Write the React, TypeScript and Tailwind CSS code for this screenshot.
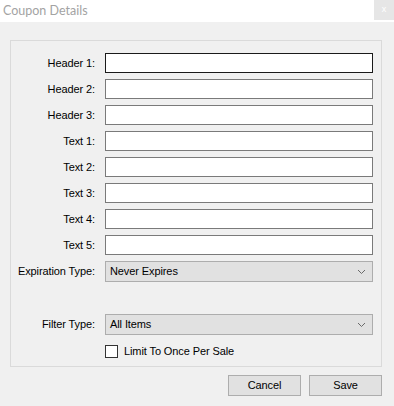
import React from 'react';

const textFields = ['Header 1:', 'Header 2:', 'Header 3:', 'Text 1:', 'Text 2:', 'Text 3:', 'Text 4:', 'Text 5:'];

function Chevron() {
  return (
    <svg width="9" height="6" viewBox="0 0 9 6" className="shrink-0">
      <path d="M1 1 L4.5 4.5 L8 1" fill="none" stroke="#6a6a6a" strokeWidth="1" />
    </svg>
  );
}

function Combo({ value, className }: { value: string; className: string }) {
  return (
    <div className={`flex h-[21px] w-[268px] items-center justify-between border border-[#adadad] bg-[#e1e1e1] pl-[4px] pr-[6px] text-[#000] ${className}`}>
      <span>{value}</span>
      <Chevron />
    </div>
  );
}

export default function App() {
  return (
    <div className="flex h-[406px] w-[394px] flex-col bg-[#f0f0f0] text-[11px] tracking-[-0.1px] font-['Liberation_Sans',Arial,sans-serif] text-black">
      {/* title bar */}
      <div className="flex h-[22px] items-start justify-between bg-white">
        <span className="pl-[3px] pt-[2px] text-[12.5px] tracking-normal font-['Lato',sans-serif] text-[#a3a3a3]">Coupon Details</span>
        <div className="flex h-[20px] w-[20px] items-center justify-center bg-[#e6e6e6] text-[9px] text-white">x</div>
      </div>

      <div className="px-[10px] pt-[18px]">
        <div className="flex h-[327px] w-[372px] flex-col border border-[#dadada] pt-[12px]">
          <div className="flex flex-col gap-[6px]">
            {textFields.map((label, i) => (
              <div key={label} className="flex items-center">
                <span className="w-[84px] text-right">{label}</span>
                <div className={`ml-[10px] h-[20px] w-[268px] bg-white border ${i === 0 ? 'border-[#1a1a1a]' : 'border-[#7a7a7a]'}`} />
              </div>
            ))}
            <div className="flex items-center">
              <span className="w-[84px] text-right">Expiration Type:</span>
              <Combo value="Never Expires" className="ml-[10px]" />
            </div>
          </div>

          <div className="mt-[32px] flex items-center">
            <span className="w-[84px] text-right">Filter Type:</span>
            <Combo value="All Items" className="ml-[10px]" />
          </div>

          <div className="mt-[8px] flex items-center">
            <div className="ml-[94px] h-[13px] w-[13px] border border-[#333] bg-white" />
            <span className="ml-[6px]">Limit To Once Per Sale</span>
          </div>
        </div>

        <div className="mt-[8px] flex justify-end gap-[8px] pr-[2px]">
          <button className="h-[21px] w-[73px] border border-[#adadad] bg-[#e1e1e1]">Cancel</button>
          <button className="h-[21px] w-[73px] border border-[#adadad] bg-[#e1e1e1]">Save</button>
        </div>
      </div>
    </div>
  );
}
